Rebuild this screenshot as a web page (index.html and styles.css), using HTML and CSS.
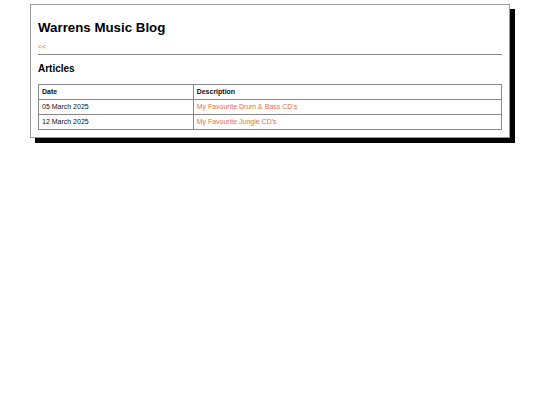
FILE: index.html
```html
<!DOCTYPE html>
<html lang="en">
<head>
  <meta charset="UTF-8">
  <meta name="viewport" content="width=device-width, initial-scale=1.0">
  <title>Warrens Music Blog</title>
  <link rel="stylesheet" href="styles.css">
</head>
<body>

  <div class="page">
    <h1>Warrens Music Blog</h1>
    <a class="back" href="#">&lt;&lt;</a>
    <hr>

    <h2>Articles</h2>
    <table class="articles">
      <tr>
        <th class="date-col">Date</th>
        <th>Description</th>
      </tr>
      <tr>
        <td>05 March 2025</td>
        <td><a href="#">My Favourite Drum &amp; Bass CD's</a></td>
      </tr>
      <tr>
        <td>12 March 2025</td>
        <td><a href="#">My Favourite Jungle CD's</a></td>
      </tr>
    </table>
  </div>

</body>
</html>
```

FILE: styles.css
```css
* {
  margin: 0;
  padding: 0;
  box-sizing: border-box;
}

html, body {
  min-height: 100%;
}

body {
  font-family: 'Liberation Sans', Arial, sans-serif;
  background-color: #fff;
  color: #111;
  padding: 4px 0 20px;
}

.page {
  width: 480px;
  margin: 0 auto;
  padding: 0 7px 7px;
  border: 1px solid #999;
  background-color: #fff;
  box-shadow: 5px 5px 0 #000;
}

h1 {
  font-size: 13.3px;
  font-weight: 700;
  margin-top: 15px;
  color: #000;
}

a {
  color: #e8703a;
  text-decoration: none;
}

.back {
  display: block;
  font-size: 6.7px;
  margin-top: 8px;
}

hr {
  border: none;
  border-top: 1px solid #888;
  margin-top: 4px;
}

h2 {
  font-size: 10px;
  font-weight: 700;
  margin-top: 8px;
  color: #000;
}

.articles {
  width: 100%;
  margin-top: 10px;
  border-collapse: collapse;
  font-size: 7px;
}

.articles th,
.articles td {
  border: 1px solid #888;
  padding: 3px 3px;
  text-align: left;
  line-height: 8px;
}

.date-col {
  width: 33.4%;
}
```
